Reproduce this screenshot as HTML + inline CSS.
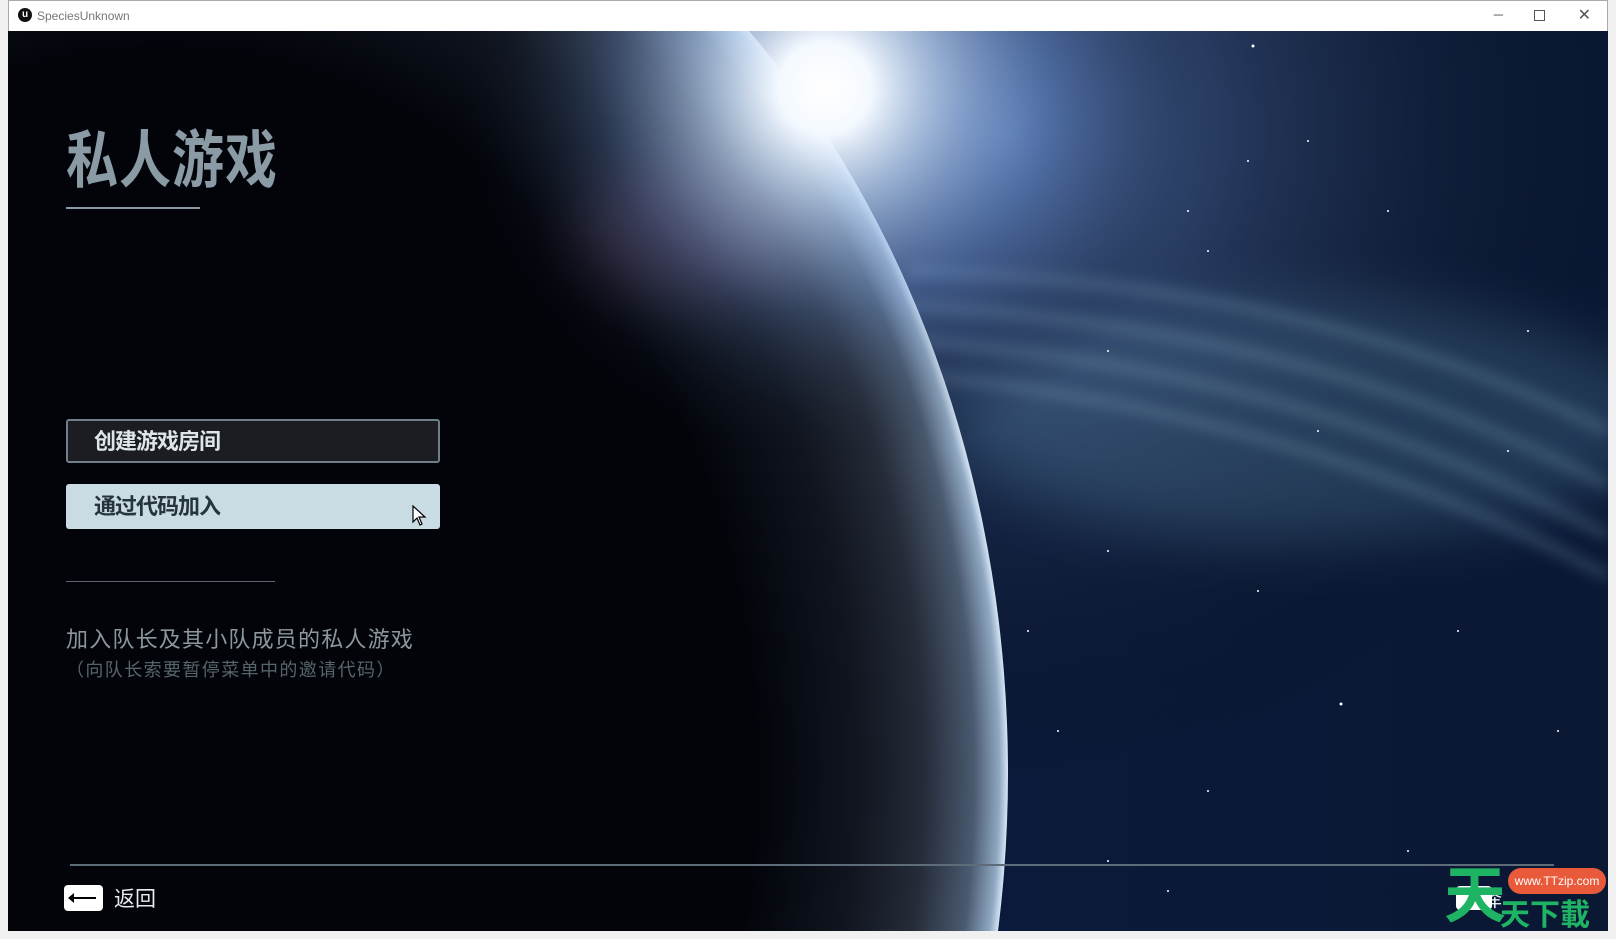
<!DOCTYPE html>
<html style="overflow:hidden"><head><meta charset="utf-8"><style>
*{margin:0;padding:0;box-sizing:border-box}
html,body{width:1616px;height:939px;overflow:hidden}
body{background:#f0f0f0;position:relative;font-family:"Liberation Sans","Noto Sans CJK SC",sans-serif}
#tb{position:absolute;left:8px;top:0;width:1600px;height:31px;background:#fff;border:1px solid #aaa;border-bottom:none}
#tb .t{position:absolute;left:28px;top:8px;font-size:12px;color:#777}
#tb .ic{position:absolute;left:9px;top:7px;width:14px;height:14px;border-radius:50%;background:#111;color:#fff;font-size:10px;line-height:14px;text-align:center;font-weight:bold}
#g{position:absolute;left:8px;top:31px;width:1600px;height:900px;overflow:hidden;background:#01030c}
.abs{position:absolute}
</style></head><body>
<div id="tb"><div class="ic">u</div><div class="t">SpeciesUnknown</div>
<div class="abs" style="right:104px;top:6px;font-size:13px;color:#555">─</div>
<div class="abs" style="right:62px;top:9px;width:11px;height:11px;border:1px solid #555"></div>
<div class="abs" style="right:16px;top:4px;font-size:16px;color:#555">✕</div>
</div>
<div id="g">
<svg class="abs" style="left:0;top:0" width="1600" height="900">
<defs>
<linearGradient id="bg" x1="0" x2="1" y1="0" y2="0"><stop offset="0" stop-color="#01030c"/><stop offset=".3" stop-color="#020615"/><stop offset=".6" stop-color="#0b1a3a"/><stop offset="1" stop-color="#0a1834"/></linearGradient>
<radialGradient id="glow" cx="1000" cy="100" r="650" gradientUnits="userSpaceOnUse"><stop offset="0" stop-color="#6a8fd0" stop-opacity=".7"/><stop offset="1" stop-color="#000" stop-opacity="0"/></radialGradient>
<radialGradient id="pl" cx="155" cy="742" r="845" gradientUnits="userSpaceOnUse" gradientTransform="translate(155 742) scale(1 1.22) translate(-155 -742)">
<stop offset=".7" stop-color="#02040a"/><stop offset=".82" stop-color="#10151f"/><stop offset=".9" stop-color="#252b38"/><stop offset=".96" stop-color="#4a5a70"/><stop offset=".99" stop-color="#90a8c2"/><stop offset="1" stop-color="#d6e6f6"/></radialGradient>
<radialGradient id="sun" cx="817" cy="57" r="380" gradientUnits="userSpaceOnUse"><stop offset="0" stop-color="#fff"/><stop offset=".12" stop-color="#f4f9ff"/><stop offset=".3" stop-color="#c0d8f6" stop-opacity=".7"/><stop offset=".6" stop-color="#6a90d0" stop-opacity=".25"/><stop offset="1" stop-color="#000" stop-opacity="0"/></radialGradient>
<filter id="bl" x="-50%" y="-50%" width="200%" height="200%"><feGaussianBlur stdDeviation="6"/></filter>
<filter id="bl2" x="-100%" y="-100%" width="300%" height="300%"><feGaussianBlur stdDeviation="30"/></filter>
</defs>
<rect width="1600" height="900" fill="url(#bg)"/>
<rect width="1600" height="900" fill="url(#glow)"/>
<ellipse cx="1300" cy="390" rx="350" ry="120" fill="#6aa0c0" opacity=".25" filter="url(#bl2)"/>
<g stroke="#a8d0e0" stroke-opacity=".16" stroke-width="14" fill="none" filter="url(#bl)">
<path d="M900 240 Q1300 250 1600 400"/><path d="M900 275 Q1300 295 1600 455"/><path d="M910 310 Q1300 340 1600 505"/><path d="M920 345 Q1300 385 1600 545"/>
</g>
<ellipse cx="155" cy="742" rx="845" ry="1030" fill="url(#pl)"/>
<ellipse cx="680" cy="200" rx="110" ry="70" fill="#8a5a80" opacity=".25" filter="url(#bl2)"/>
<rect width="1600" height="900" fill="url(#sun)"/>
<g fill="#fff">
<circle cx="1245" cy="15" r="1.5"/><circle cx="1300" cy="110" r="1"/><circle cx="1380" cy="180" r="1"/><circle cx="1200" cy="220" r="1"/><circle cx="1100" cy="320" r="1"/><circle cx="1500" cy="420" r="1"/><circle cx="1310" cy="400" r="1"/><circle cx="1100" cy="520" r="1"/><circle cx="1450" cy="600" r="1"/><circle cx="1333" cy="673" r="1.5"/><circle cx="1050" cy="700" r="1"/><circle cx="1200" cy="760" r="1"/><circle cx="1550" cy="700" r="1"/><circle cx="1400" cy="820" r="1"/><circle cx="1100" cy="830" r="1"/><circle cx="1240" cy="130" r="1"/><circle cx="1180" cy="180" r="1"/><circle cx="1520" cy="300" r="1"/><circle cx="1020" cy="600" r="1"/><circle cx="1250" cy="560" r="1"/><circle cx="1160" cy="860" r="1"/>
</g>
</svg>
<div class="abs" style="left:58px;top:90px;font-size:52px;font-weight:bold;color:#8a9ba6;letter-spacing:1px;font-family:'Noto Sans CJK SC',sans-serif;transform:scaleY(1.2);transform-origin:0 0;line-height:1.1">私人游戏</div>
<div class="abs" style="left:58px;top:176px;width:134px;height:2px;background:#8a9ba6"></div>
<div class="abs" style="left:58px;top:388px;width:374px;height:44px;border:2px solid #6f7f8a;border-radius:3px;background:rgba(30,32,38,.9)"></div>
<div class="abs" style="left:86px;top:393px;font-size:22px;font-weight:bold;color:#dfe6ea;font-family:'Noto Sans CJK SC',sans-serif;letter-spacing:-1px">创建游戏房间</div>
<div class="abs" style="left:58px;top:453px;width:374px;height:45px;border-radius:3px;background:#c9dbe3"></div>
<div class="abs" style="left:86px;top:458px;font-size:22px;font-weight:bold;color:#26343c;font-family:'Noto Sans CJK SC',sans-serif;letter-spacing:-1px">通过代码加入</div>
<svg class="abs" style="left:404px;top:474px" width="16" height="22"><path d="M1 1 L1 17 L5 13 L8 20 L10 19 L7 12 L13 12 Z" fill="#fff" stroke="#000" stroke-width="1.2"/></svg>
<div class="abs" style="left:58px;top:550px;width:209px;height:1px;background:#5a6670"></div>
<div class="abs" style="left:58px;top:591px;font-size:22px;color:#8c979d;letter-spacing:1.2px">加入队长及其小队成员的私人游戏</div>
<div class="abs" style="left:58px;top:625px;font-size:18px;color:#56646c;letter-spacing:1.4px">（向队长索要暂停菜单中的邀请代码）</div>
<div class="abs" style="left:62px;top:833px;width:1484px;height:2px;background:#5d6c78"></div>
<div class="abs" style="left:56px;top:854px;width:39px;height:26px;background:#fff;border-radius:4px"></div>
<div class="abs" style="left:62px;top:866px;width:26px;height:2px;background:#000"></div>
<div class="abs" style="left:60px;top:862px;width:0;height:0;border-top:5px solid transparent;border-bottom:5px solid transparent;border-right:6px solid #000"></div>
<div class="abs" style="left:106px;top:852px;font-size:21px;color:#e6ecef">返回</div>
<div class="abs" style="left:1452px;top:852px;font-size:21px;color:#e6ecef">选择</div>
<div class="abs" style="left:1448px;top:855px;width:36px;height:24px;background:#fff;border-radius:4px"></div>
<div class="abs" style="left:1436px;top:828px;font-size:62px;font-weight:bold;color:#1fb364;font-family:'Noto Sans CJK SC',sans-serif;line-height:1">天</div>
<div class="abs" style="left:1492px;top:866px;font-size:30px;font-weight:bold;color:#1fb364;font-family:'Noto Sans CJK SC',sans-serif;line-height:1">天下載</div>
<div class="abs" style="left:1500px;top:837px;width:98px;height:26px;border-radius:13px;background:#e85a3a;color:#fff;font-size:12px;line-height:26px;text-align:center">www.TTzip.com</div>
</div>
</body></html>
